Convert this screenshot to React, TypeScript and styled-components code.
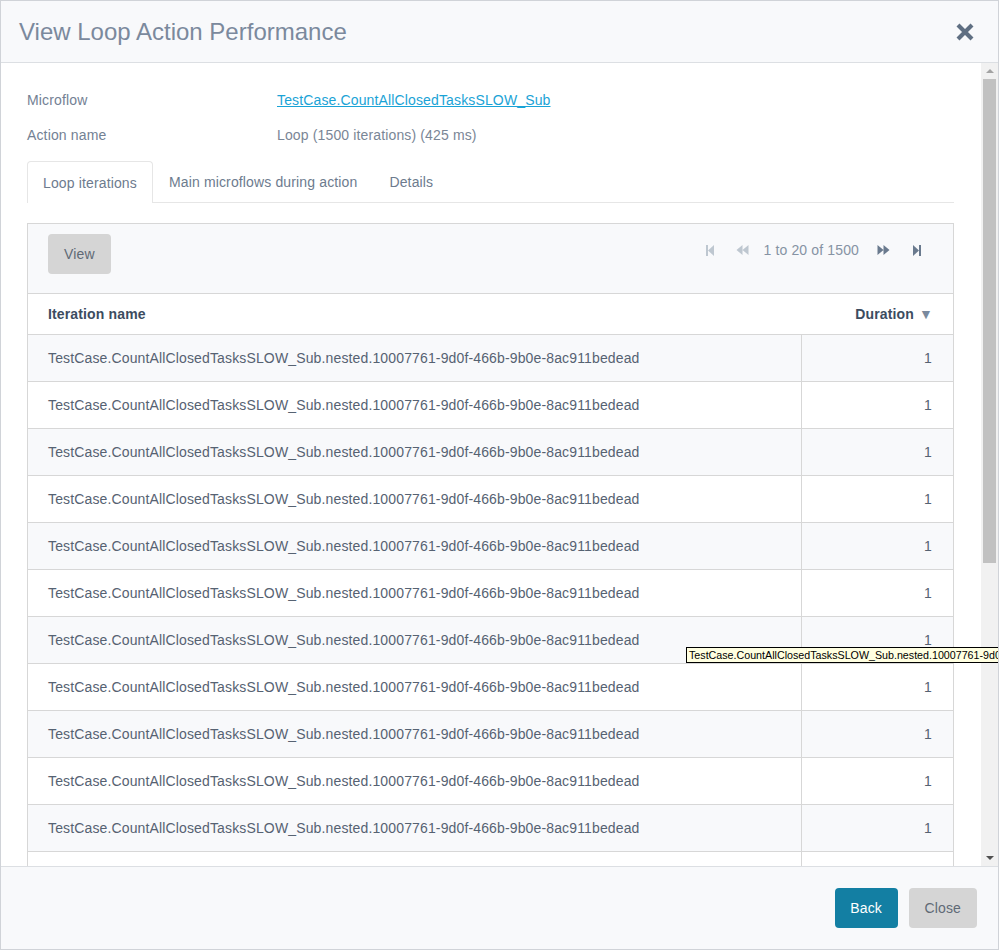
import styled, { createGlobalStyle } from "styled-components";

const GlobalStyle = createGlobalStyle`
	html, body {
		margin: 0;
		padding: 0;
		background: #fff;
	}
	body {
		font-family: "Liberation Sans", Arial, sans-serif;
		font-size: 14px;
		letter-spacing: 0.14px;
	}
	* {
		box-sizing: border-box;
	}
`;

const Modal = styled.div`
	position: relative;
	width: 999px;
	height: 950px;
	border: 1px solid #d0d3d8;
	display: flex;
	flex-direction: column;
	background: #fff;
	overflow: hidden;
`;

const Header = styled.div`
	height: 62px;
	flex: none;
	display: flex;
	align-items: center;
	justify-content: space-between;
	padding: 0 23px 0 18px;
	background: #f8f9fb;
	border-bottom: 1px solid #dcdfe3;
`;

const Title = styled.h4`
	margin: 0;
	font-size: 24px;
	font-weight: normal;
	letter-spacing: 0;
	color: #7b899d;
`;

const CloseIcon = styled.button`
	border: 0;
	background: transparent;
	padding: 0;
	width: 20px;
	height: 20px;
	display: flex;
	cursor: pointer;
`;

const BodyFrame = styled.div`
	flex: 1;
	min-height: 0;
	display: flex;
`;

const ScrollArea = styled.div`
	flex: 1;
	overflow: hidden;
	padding: 19px 27px 64px 26px;
`;

const Scrollbar = styled.div`
	width: 17px;
	flex: none;
	display: flex;
	flex-direction: column;
	background: #f1f1f1;
`;

const ScrollArrow = styled.div`
	height: 16px;
	flex: none;
	display: flex;
	align-items: center;
	justify-content: center;
`;

const ScrollTrack = styled.div`
	flex: 1;
	padding: 0 2px;
`;

const ScrollThumb = styled.div`
	height: 484px;
	background: #c1c1c1;
`;

const InfoGrid = styled.div`
	display: grid;
	grid-template-columns: 250px 1fr;
	grid-auto-rows: 35px;
	align-items: center;
`;

const Label = styled.div`
	color: #738194;
`;

const Value = styled.div`
	color: #7a8696;
`;

const Link = styled.a`
	color: #1aa3d6;
	text-decoration: underline;
`;

const TabBar = styled.div`
	margin-top: 9px;
	display: flex;
	border-bottom: 1px solid #e6e6e6;
`;

const TabItem = styled.div<{ $active?: boolean }>`
	height: 42px;
	padding: 0 15px;
	display: flex;
	align-items: center;
	color: #6d7b8e;
	border: 1px solid ${(p) => (p.$active ? "#e6e6e6" : "transparent")};
	border-bottom: 0;
	border-radius: 4px 4px 0 0;
	background: ${(p) => (p.$active ? "#fff" : "transparent")};
	margin-bottom: ${(p) => (p.$active ? "-1px" : "0")};
	height: ${(p) => (p.$active ? "42px" : "41px")};
`;

const Grid = styled.div`
	margin-top: 20px;
	border: 1px solid #d7d7d7;
`;

const Toolbar = styled.div`
	height: 70px;
	display: flex;
	justify-content: space-between;
	align-items: flex-start;
	padding: 10px 20px 0;
	background: #f8f9fb;
	border-bottom: 1px solid #d7d7d7;
`;

const Button = styled.button<{ $primary?: boolean }>`
	height: 40px;
	padding: 0 ${(p) => (p.$primary ? "15.5px" : "16px")};
	border: 0;
	border-radius: 4px;
	font-family: "Liberation Sans", Arial, sans-serif;
	font-size: 14px;
	letter-spacing: 0.14px;
	background: ${(p) => (p.$primary ? "#137fa3" : "#d5d5d5")};
	color: ${(p) => (p.$primary ? "#fff" : "#606a75")};
	cursor: pointer;
`;

const Paging = styled.div`
	display: flex;
	align-items: center;
	height: 32px;
	color: #8693a4;
`;

const PageBtn = styled.span<{ $disabled?: boolean }>`
	display: flex;
	align-items: center;
	justify-content: center;
	width: 33px;
	color: ${(p) => (p.$disabled ? "#bec7d0" : "#6a7a8e")};
`;

const PageText = styled.span`
	padding: 0 8px 0 4px;
`;

const HeadRow = styled.div`
	height: 41px;
	display: flex;
	align-items: center;
	justify-content: space-between;
	padding: 0 20px;
	border-bottom: 1px solid #d7d7d7;
	font-weight: bold;
	color: #3c4c5f;
`;

const SortArrow = styled.span`
	margin-left: 5px;
	color: #7a8a9e;
	font-size: 14px;
`;

const Row = styled.div<{ $odd: boolean }>`
	height: 47px;
	display: grid;
	grid-template-columns: 1fr 151px;
	border-bottom: 1px solid #d7d7d7;
	background: ${(p) => (p.$odd ? "#f8f9fb" : "#fff")};
	color: #566272;

	&:last-child {
		border-bottom: 0;
	}
`;

const NameCell = styled.div`
	display: flex;
	align-items: center;
	padding: 0 20px;
	border-right: 1px solid #d7d7d7;
`;

const DurationCell = styled.div`
	display: flex;
	align-items: center;
	justify-content: flex-end;
	padding: 0 21px;
`;

const Footer = styled.div`
	height: 83px;
	flex: none;
	display: flex;
	justify-content: flex-end;
	align-items: flex-start;
	gap: 11px;
	padding: 21px 21px 0;
	background: #f8f9fb;
	border-top: 1px solid #dcdfe3;
`;

const Tooltip = styled.div`
	position: absolute;
	left: 685px;
	top: 646px;
	height: 16px;
	padding: 0 2px;
	white-space: nowrap;
	border: 1px solid #000;
	background: #ffffe1;
	color: #000;
	font-size: 10.7px;
	letter-spacing: 0;
	line-height: 14px;
`;

const ITERATION = "TestCase.CountAllClosedTasksSLOW_Sub.nested.10007761-9d0f-466b-9b0e-8ac911bedead";

const rows = Array.from({ length: 20 }, () => ({ name: ITERATION, duration: 1 }));

const FirstIcon = () => (
	<svg width="10" height="11" viewBox="0 0 10 11">
		<rect x="1" y="0" width="2" height="11" fill="currentColor" />
		<path d="M9 0 L3 5.5 L9 11 Z" fill="currentColor" />
	</svg>
);

const PrevIcon = () => (
	<svg width="13" height="10" viewBox="0 0 13 10">
		<path d="M6.5 0 L0.5 5 L6.5 10 Z M12.5 0 L6.5 5 L12.5 10 Z" fill="currentColor" />
	</svg>
);

const NextIcon = () => (
	<svg width="13" height="10" viewBox="0 0 13 10">
		<path d="M0.5 0 L6.5 5 L0.5 10 Z M6.5 0 L12.5 5 L6.5 10 Z" fill="currentColor" />
	</svg>
);

const LastIcon = () => (
	<svg width="10" height="11" viewBox="0 0 10 11">
		<path d="M1 0 L7 5.5 L1 11 Z" fill="currentColor" />
		<rect x="7" y="0" width="2" height="11" fill="currentColor" />
	</svg>
);

export default function App() {
	return (
		<>
			<GlobalStyle />
			<Modal>
				<Header>
					<Title>View Loop Action Performance</Title>
					<CloseIcon aria-label="Close">
						<svg width="20" height="20" viewBox="0 0 20 20">
							<path d="M3 3 L17 17 M17 3 L3 17" stroke="#5f6f82" strokeWidth="4.2" />
						</svg>
					</CloseIcon>
				</Header>
				<BodyFrame>
					<ScrollArea>
						<InfoGrid>
							<Label>Microflow</Label>
							<Value>
								<Link href="#">TestCase.CountAllClosedTasksSLOW_Sub</Link>
							</Value>
							<Label>Action name</Label>
							<Value>Loop (1500 iterations) (425 ms)</Value>
						</InfoGrid>
						<TabBar>
							<TabItem $active>Loop iterations</TabItem>
							<TabItem>Main microflows during action</TabItem>
							<TabItem>Details</TabItem>
						</TabBar>
						<Grid>
							<Toolbar>
								<Button>View</Button>
								<Paging>
									<PageBtn $disabled><FirstIcon /></PageBtn>
									<PageBtn $disabled><PrevIcon /></PageBtn>
									<PageText>1 to 20 of 1500</PageText>
									<PageBtn><NextIcon /></PageBtn>
									<PageBtn><LastIcon /></PageBtn>
								</Paging>
							</Toolbar>
							<HeadRow>
								<span>Iteration name</span>
								<span>
									Duration<SortArrow>▼</SortArrow>
								</span>
							</HeadRow>
							{rows.map((row, i) => (
								<Row key={i} $odd={i % 2 === 0}>
									<NameCell>{row.name}</NameCell>
									<DurationCell>{row.duration}</DurationCell>
								</Row>
							))}
						</Grid>
					</ScrollArea>
					<Scrollbar>
						<ScrollArrow>
							<svg width="8" height="4" viewBox="0 0 8 4">
								<path d="M0 4 L4 0 L8 4 Z" fill="#a3a3a3" />
							</svg>
						</ScrollArrow>
						<ScrollTrack>
							<ScrollThumb />
						</ScrollTrack>
						<ScrollArrow>
							<svg width="8" height="4" viewBox="0 0 8 4">
								<path d="M0 0 L8 0 L4 4 Z" fill="#505050" />
							</svg>
						</ScrollArrow>
					</Scrollbar>
				</BodyFrame>
				<Footer>
					<Button $primary>Back</Button>
					<Button>Close</Button>
				</Footer>
				<Tooltip>TestCase.CountAllClosedTasksSLOW_Sub.nested.10007761-9d0f-466b-9b0e-8ac911bedead</Tooltip>
			</Modal>
		</>
	);
}
